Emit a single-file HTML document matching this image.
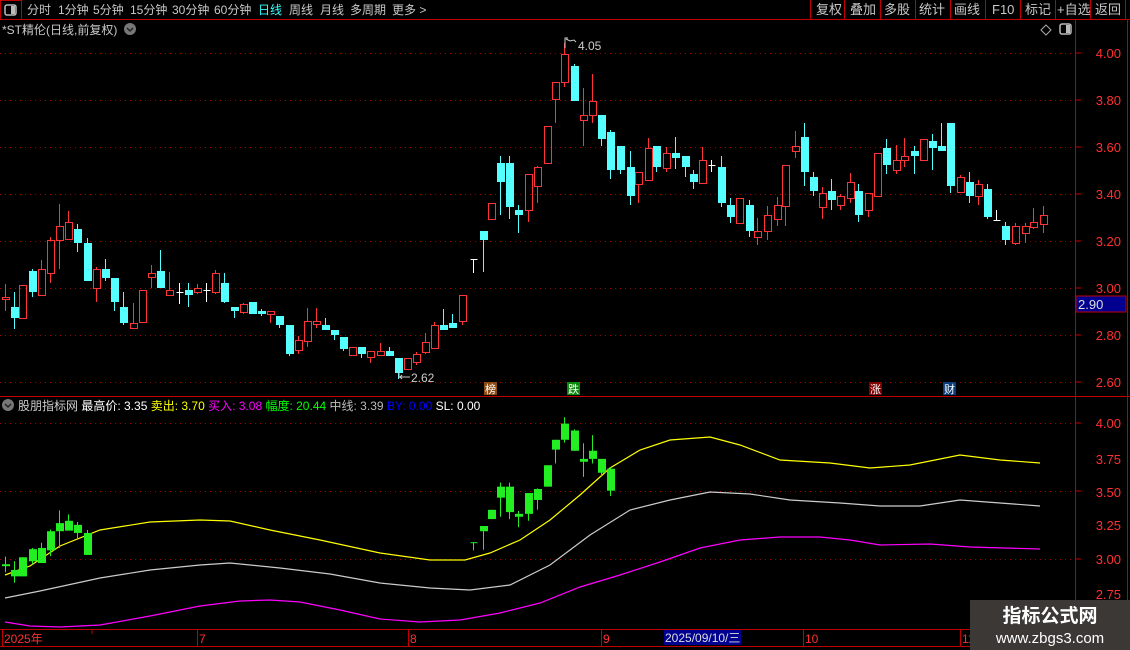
<!DOCTYPE html>
<html><head><meta charset="utf-8">
<style>
body{margin:0;background:#000;width:1130px;height:650px;overflow:hidden;font-family:"Liberation Sans","Noto Sans CJK SC",sans-serif}
svg{position:absolute;left:0;top:0}
text{font-family:"Liberation Sans","Noto Sans CJK SC",sans-serif}
</style></head><body>
<svg id="s" width="1130" height="650" xmlns="http://www.w3.org/2000/svg">
<rect width="1130" height="650" fill="#000"/>
<line x1="0" y1="19.5" x2="1130" y2="19.5" stroke="#c00000"/>
<rect x="0.5" y="0.5" width="21" height="19" fill="none" stroke="#c00000"/>
<rect x="5" y="5" width="11" height="10" rx="2" fill="none" stroke="#bbb" stroke-width="1.5"/>
<rect x="11" y="6" width="4" height="8" fill="#bbb"/>
<g font-size="12" fill="#c8c8c8">
<text x="27" y="14">分时</text><text x="58" y="14">1分钟</text><text x="93" y="14">5分钟</text>
<text x="130" y="14">15分钟</text><text x="172" y="14">30分钟</text><text x="214" y="14">60分钟</text>
<text x="258" y="14" fill="#3ff">日线</text><text x="289" y="14">周线</text><text x="320" y="14">月线</text>
<text x="350" y="14">多周期</text><text x="392" y="14">更多 &gt;</text>
</g>
<g stroke="#c00000">
<line x1="810.5" y1="0" x2="810.5" y2="19"/><line x1="844.5" y1="0" x2="844.5" y2="19"/><line x1="880.5" y1="0" x2="880.5" y2="19"/>
<line x1="915.5" y1="0" x2="915.5" y2="19"/><line x1="950.5" y1="0" x2="950.5" y2="19"/><line x1="985.5" y1="0" x2="985.5" y2="19"/>
<line x1="1020.5" y1="0" x2="1020.5" y2="19"/><line x1="1055.5" y1="0" x2="1055.5" y2="19"/><line x1="1090.5" y1="0" x2="1090.5" y2="19"/>
<line x1="1125.5" y1="0" x2="1125.5" y2="19"/>
</g>
<g font-size="13" fill="#c8c8c8">
<text x="816" y="14">复权</text><text x="850" y="14">叠加</text><text x="884" y="14">多股</text><text x="919" y="14">统计</text>
<text x="954" y="14">画线</text><text x="992" y="14">F10</text><text x="1025" y="14">标记</text><text x="1057" y="14">+自选</text><text x="1095" y="14">返回</text>
</g>
<text x="2" y="34" font-size="12" fill="#c8c8c8">*ST精伦(日线,前复权)</text>
<circle cx="130" cy="29" r="6" fill="#777"/><path d="M127 28l3 3 3-3" stroke="#222" stroke-width="1.5" fill="none"/>
<path d="M1046 25l5 5-5 5-5-5z" fill="none" stroke="#aaa"/>
<rect x="1060" y="24" width="11" height="10" rx="2" fill="none" stroke="#bbb" stroke-width="1.5"/><rect x="1066" y="25" width="4" height="8" fill="#bbb"/>
<line x1="1075.5" y1="20" x2="1075.5" y2="630" stroke="#c00000"/>
<line x1="1127.5" y1="20" x2="1127.5" y2="630" stroke="#c00000"/>
<line x1="0" y1="396.5" x2="1130" y2="396.5" stroke="#c00000"/>
<line x1="0" y1="629.5" x2="1130" y2="629.5" stroke="#c00000"/>
<line x1="0" y1="646.5" x2="1130" y2="646.5" stroke="#c00000"/>
<g id="grid" stroke="#a00000" stroke-dasharray="1,4"></g>
<g id="cand"></g>
<circle cx="8" cy="405" r="6" fill="#777"/><path d="M5 404l3 3 3-3" stroke="#222" stroke-width="1.5" fill="none"/>
<text x="18" y="410" font-size="12" fill="#ccc">股朋指标网 <tspan fill="#fff">最高价: 3.35</tspan> <tspan fill="#ff0">卖出: 3.70</tspan> <tspan fill="#f0f">买入: 3.08</tspan> <tspan fill="#0f0">幅度: 20.44</tspan> <tspan fill="#bbb">中线: 3.39</tspan> <tspan fill="#0000ff">BY: 0.00</tspan> <tspan fill="#fff">SL: 0.00</tspan></text>
<polyline fill="none" stroke="#ff0" stroke-width="1.2" points="5,575 30,566 60,546 100,530 150,522 200,520 230,521 270,530 320,540 380,553 430,560 465,560 490,553 520,540 550,520 580,495 610,468 640,450 670,440 710,437 740,445 780,460 830,463 870,468 910,465 960,455 1000,460 1040,463"/>
<polyline fill="none" stroke="#ccc" stroke-width="1.2" points="5,598 40,591 100,578 150,570 200,565 230,563 280,568 330,574 380,583 430,588 470,590 510,585 550,565 590,535 630,510 670,500 710,492 750,494 790,500 840,503 880,506 920,506 960,500 1000,503 1040,506"/>
<polyline fill="none" stroke="#f0f" stroke-width="1.2" points="5,622 30,626 60,627 100,625 150,616 200,606 240,601 270,600 300,602 340,610 380,619 420,622 460,620 500,613 540,603 580,587 620,575 660,562 700,548 740,540 780,537 820,537 850,540 880,545 930,544 970,547 1040,549"/>
<g id="low"></g>
<g font-size="13" fill="#ff3030" text-anchor="end">
<text x="1121" y="58">4.00</text><text x="1121" y="105">3.80</text><text x="1121" y="152">3.60</text><text x="1121" y="199">3.40</text>
<text x="1121" y="246">3.20</text><text x="1121" y="293">3.00</text><text x="1121" y="340">2.80</text><text x="1121" y="387">2.60</text>
<text x="1121" y="428">4.00</text><text x="1121" y="464">3.75</text><text x="1121" y="497">3.50</text><text x="1121" y="530">3.25</text><text x="1121" y="564">3.00</text><text x="1121" y="599">2.75</text>
</g>
<rect x="1076" y="296" width="50" height="16" fill="#000090" stroke="#c00000"/>
<text x="1078" y="309" font-size="13" fill="#ddd">2.90</text>
<g stroke="#c00000">
<line x1="1075" y1="53" x2="1081" y2="53"/><line x1="1075" y1="100" x2="1081" y2="100"/><line x1="1075" y1="147" x2="1081" y2="147"/><line x1="1075" y1="194" x2="1081" y2="194"/><line x1="1075" y1="241" x2="1081" y2="241"/><line x1="1075" y1="288" x2="1081" y2="288"/><line x1="1075" y1="335" x2="1081" y2="335"/><line x1="1075" y1="382" x2="1081" y2="382"/><line x1="1075" y1="423" x2="1081" y2="423"/><line x1="1075" y1="491" x2="1081" y2="491"/><line x1="1075" y1="559" x2="1081" y2="559"/>
</g>
<text x="578" y="50" font-size="12" fill="#ccc">4.05</text>
<path d="M565 48V38h3M566 39l4 2 4-1 2 2" stroke="#ccc" fill="none"/>
<text x="411" y="382" font-size="12" fill="#ccc">2.62</text>
<path d="M399 370v8M400 377h10M402 375l-2 2 2 2" stroke="#ccc" fill="none"/>
<g font-size="11" fill="#fff">
<rect x="484" y="382" width="13" height="13" fill="#8b4a10"/><text x="485" y="393">榜</text>
<rect x="567" y="382" width="13" height="13" fill="#0a8a0a"/><text x="568" y="393">跌</text>
<rect x="869" y="382" width="13" height="13" fill="#800000"/><text x="870" y="393">涨</text>
<rect x="943" y="382" width="13" height="13" fill="#0b3c7a"/><text x="944" y="393">财</text>
</g>
<g stroke="#c00000"><line x1="92" y1="630" x2="92" y2="634"/><line x1="197.5" y1="630" x2="197.5" y2="646"/><line x1="408.5" y1="630" x2="408.5" y2="646"/><line x1="601.5" y1="630" x2="601.5" y2="646"/><line x1="803.5" y1="630" x2="803.5" y2="646"/><line x1="960.5" y1="630" x2="960.5" y2="646"/><line x1="2.5" y1="630" x2="2.5" y2="646"/></g>
<g font-size="12" fill="#ff3030">
<text x="4" y="643">2025年</text><text x="199" y="643">7</text><text x="410" y="643">8</text><text x="603" y="643">9</text><text x="805" y="643">10</text><text x="962" y="643">11</text>
</g>
<rect x="664" y="630" width="77" height="15" fill="#000090"/>
<text x="665" y="642" font-size="12" fill="#ddd">2025/09/10/三</text>
<rect x="970" y="600" width="160" height="50" fill="#3b3836"/>
<text x="1050" y="622" font-size="19" font-weight="bold" fill="#fff" text-anchor="middle">指标公式网</text>
<text x="1050" y="643" font-size="15" fill="#fff" text-anchor="middle">www.zbgs3.com</text>
</svg>
<script>
var NS="http://www.w3.org/2000/svg";
function el(p,t,a){var e=document.createElementNS(NS,t);for(var k in a)e.setAttribute(k,a[k]);p.appendChild(e);return e;}
var g=document.getElementById('grid');
[53,100,147,194,241,288,335,382,423,491,559].forEach(function(y){el(g,'line',{x1:0,y1:y+.5,x2:1075,y2:y+.5});});
var D=[[4.5,297,299,284,311,'r'],[13.5,307,318,292,329,'c'],[22,285,318,285,318,'r'],[32,271,292,269,297,'c'],[41,269,295,260,295,'r'],[50,240,273,237,283,'r'],[59,226,240,204,269,'r'],[68,222,239,211,239,'r'],[77,229,243,224,252,'c'],[87,243,281,238,281,'c'],[96,269,288,267,302,'r'],[105,269,278,259,281,'c'],[114,278,302,278,311,'c'],[123,307,323,292,325,'c'],[133,323,328,303,328,'r'],[142,290,322,290,322,'r'],[151,273,277,265,288,'r'],[160,271,288,250,288,'c'],[169,290,295,272,295,'r'],[179,292,292,283,304,'w'],[188,290,295,283,307,'c'],[197,288,292,284,294,'r'],[206,290,290,283,302,'w'],[215,273,292,270,294,'r'],[224,283,302,273,303,'c'],[234,307,311,307,318,'c'],[243,304,312,303,314,'r'],[252,302,314,302,314,'c'],[261,311,314,309,316,'c'],[270,311,314,311,323,'r'],[279,316,325,316,328,'c'],[289,325,354,325,356,'c'],[298,340,350,336,354,'r'],[307,321,341,308,347,'r'],[316,321,324,308,328,'r'],[325,325,330,318,330,'c'],[334,330,335,330,340,'c'],[343,337,349,337,351,'c'],[352,347,355,347,356,'r'],[361,347,354,347,358,'c'],[370,351,357,351,363,'r'],[380,351,355,343,355,'r'],[389,351,356,347,356,'c'],[398,358,373,358,379,'c'],[407,358,369,358,369,'r'],[416,354,362,352,365,'r'],[425,342,352,333,354,'r'],[434,325,348,322,348,'r'],[443,325,330,309,330,'c'],[452,323,328,314,328,'c'],[462,295,321,295,325,'r'],[473,259,259,259,273,'T'],[482.6,231,240,231,272,'c'],[491.4,203,219,203,219,'r'],[500.2,163,182,156,215,'c'],[509.4,163,207,156,219,'c'],[518.2,210,215,205,233,'c'],[528.1,174,210,174,222,'r'],[537.3,167,186,166,203,'r'],[546.5,126,163,126,163,'r'],[555.3,82,99,82,123,'r'],[564.1,54,82,43,87,'r'],[574,66,101,64,101,'c'],[583.2,115,120,88,146,'r'],[592,101,115,74,123,'r'],[601.2,115,139,115,146,'c'],[610.4,132,170,130,179,'c'],[620.4,146,170,146,174,'c'],[629.5,167,196,151,205,'c'],[638.3,172,184,172,203,'r'],[647.5,148,180,138,180,'r'],[656.3,146,167,146,172,'c'],[665.5,153,168,147,172,'r'],[675.1,153,158,137,169,'c'],[684.6,156,167,156,177,'c'],[693.1,174,182,170,189,'c'],[702.3,160,183,147,183,'r'],[711.1,165,165,160,172,'w'],[721.4,167,203,156,207,'c'],[730.2,205,217,198,223,'c'],[739.4,198,223,198,223,'r'],[748.5,205,231,200,237,'c'],[757.4,231,237,218,245,'r'],[767.3,215,231,206,240,'r'],[776.5,205,219,197,226,'r'],[785.3,165,206,165,226,'r'],[794.5,146,151,131,158,'r'],[803.7,137,172,123,186,'c'],[812.5,177,191,172,196,'c'],[822,193,207,187,219,'r'],[831.2,191,200,179,210,'c'],[840.4,196,205,194,210,'r'],[849.6,182,198,173,203,'r'],[858.4,191,215,184,222,'c'],[868.3,193,210,193,217,'r'],[877.1,153,196,153,196,'r'],[886.3,148,165,139,174,'c'],[895.5,160,170,145,174,'r'],[904.3,156,160,138,167,'r'],[914.3,151,156,146,174,'c'],[923.1,139,160,139,160,'r'],[932.2,141,148,134,170,'c'],[941.4,146,151,123,151,'c'],[950.2,123,186,123,193,'c'],[960.2,177,192,175,192,'r'],[969.4,182,196,172,203,'c'],[978.2,184,196,180,205,'r'],[987.4,189,217,184,219,'c'],[996.2,220,220,210,220,'B'],[1005.4,226,240,222,245,'c'],[1015.3,226,243,223,245,'r'],[1024.5,226,233,223,243,'r'],[1033.3,222,227,208,229,'r'],[1042.5,215,224,206,233,'r']];
var c=document.getElementById('cand'),L=document.getElementById('low');
function draw(p,d,f,low){var x=Math.round(d[0])+.5,t=d[1],b=d[2],h=d[3],l=d[4],k=d[5];
 var col=k=='r'?'#ff3535':k=='c'?'#55ffff':'#fff';
 if(low){col='#22ee22';}
 if(k=='w'||k=='T'||k=='B'){var c2=low?'#22ee22':'#fff';el(p,'line',{x1:x,y1:h,x2:x,y2:l,stroke:c2});el(p,'line',{x1:x-3,y1:t+.5,x2:x+4,y2:t+.5,stroke:c2});return;}
 if(k=='r'&&!low){el(p,'line',{x1:x,y1:h,x2:x,y2:t,stroke:col});el(p,'line',{x1:x,y1:b,x2:x,y2:l,stroke:col});el(p,'rect',{x:x-3,y:t+.5,width:7,height:Math.max(b-t,1),fill:'none',stroke:col});}
 else{el(p,'line',{x1:x,y1:h,x2:x,y2:l,stroke:col});el(p,'rect',{x:x-3.5,y:t,width:8,height:Math.max(b-t,2),fill:col});}
}
D.forEach(function(d,i){draw(c,d,0,0);
 if(i<10||(i>=51&&i<=66)){var m=function(y){return 423+(y-53)*0.5787;};draw(L,[d[0],m(d[1]),m(d[2]),m(d[3]),m(d[4]),d[5]],0,1);}
});
</script>
</body></html>
